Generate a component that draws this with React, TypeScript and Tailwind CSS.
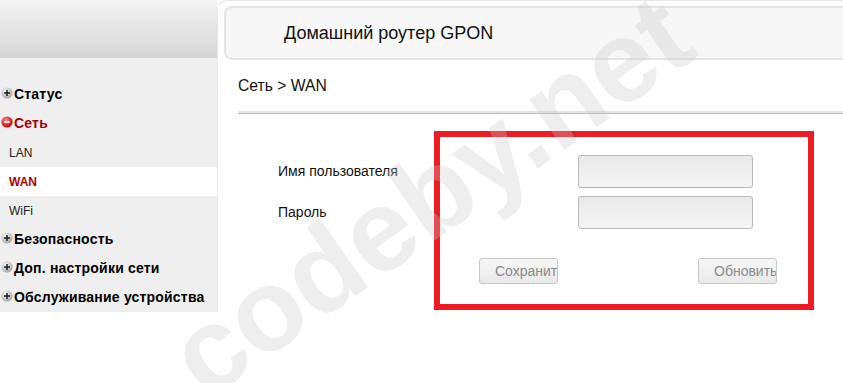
import React from "react";

const font = { fontFamily: '"Liberation Sans", Arial, sans-serif' };

const PlusIcon = ({ open }: { open?: boolean }) => (
  <svg width="12" height="12" viewBox="0 0 12 12" className="shrink-0 -mt-[3px]">
    <defs>
      <radialGradient id={open ? "gr" : "gg"} cx="40%" cy="35%" r="65%">
        <stop offset="0%" stopColor={open ? "#ff8a8a" : "#ffffff"} />
        <stop offset="100%" stopColor={open ? "#c40000" : "#a5a5a5"} />
      </radialGradient>
    </defs>
    <circle cx="6" cy="6" r="5.6" fill={`url(#${open ? "gr" : "gg"})`} />
    <rect x="3" y="5.2" width="6" height="1.6" fill={open ? "#ffffff" : "#222"} />
    {!open && <rect x="5.2" y="3" width="1.6" height="6" fill="#222" />}
  </svg>
);

const Section = ({ label, open }: { label: string; open?: boolean }) => (
  <div className="h-[29px] flex items-center pl-[1px]">
    <PlusIcon open={open} />
    <span
      className={`ml-[1px] text-[14px] tracking-[0.2px] font-bold ${open ? "text-[#a80000]" : "text-black"}`}
    >
      {label}
    </span>
  </div>
);

const SubItem = ({ label, active }: { label: string; active?: boolean }) => (
  <div
    className={`h-[29px] flex items-center pl-[9px] text-[12px] ${
      active ? "bg-white text-[#b00000] font-bold" : "text-[#222]"
    }`}
  >
    {label}
  </div>
);

const Field = () => (
  <div className="w-[175px] h-[33px] rounded-[3px] border border-[#b9b9b9] bg-gradient-to-b from-[#e9e9e9] to-[#f4f4f4]" />
);

const Btn = ({ label }: { label: string }) => (
  <div className="w-[79px] h-[26px] rounded-[3px] border border-[#c6c6c6] bg-gradient-to-b from-[#f7f7f7] to-[#e9e9e9] overflow-hidden whitespace-nowrap pl-[15px] flex items-center text-[14px] text-[#8a8a8a]">
    {label}
  </div>
);

export default function App() {
  return (
    <div className="relative w-[843px] h-[383px] bg-white overflow-hidden" style={font}>
      <div className="flex">
        <aside className="w-[217px] shrink-0">
          <div className="h-[58px] bg-gradient-to-b from-[#f4f4f4] to-[#d5d5d5]" />
          <div className="bg-[#efefef] pt-[22px] pb-0">
            <Section label="Статус" />
            <Section label="Сеть" open />
            <SubItem label="LAN" />
            <SubItem label="WAN" active />
            <SubItem label="WiFi" />
            <Section label="Безопасность" />
            <Section label="Доп. настройки сети" />
            <Section label="Обслуживание устройства" />
          </div>
        </aside>

        <main className="flex-1 min-w-0 border-t border-l border-[#e8e8e8] rounded-tl-[10px] pt-[5px]">
          <div className="ml-[6px] h-[54px] border-2 border-r-0 border-[#e4e4e4] rounded-l-[8px] bg-[#f7f7f7] flex items-center pl-[58px] text-[18px] text-[#111]">
            Домашний роутер GPON
          </div>

          <div className="pl-[20px]">
            <div className="mt-[17px] text-[15.7px] text-[#111] leading-[18px]">Сеть &gt; WAN</div>
            <div className="mt-[16px] h-[3px] border-b border-[#bdbdbd] bg-[#e4e4e4]" />

            <div className="ml-[40px] mt-[41px] grid grid-cols-[300px_175px] gap-y-[8px] items-center">
              <div className="text-[14px] text-[#111]">Имя пользователя</div>
              <Field />
              <div className="text-[14px] text-[#111]">Пароль</div>
              <Field />
            </div>

            <div className="ml-[241px] mt-[29px] flex gap-[140px]">
              <Btn label="Сохранить" />
              <Btn label="Обновить" />
            </div>
          </div>
        </main>
      </div>

      <div className="absolute left-[434px] top-[131px] w-[380px] h-[179px] border-[6px] border-[#ed1c24] pointer-events-none" />

      <div className="absolute left-[430px] top-[195px] -translate-x-1/2 -translate-y-1/2 -rotate-[35deg] whitespace-nowrap text-[116px] font-bold text-[rgba(200,200,200,0.3)] pointer-events-none leading-none">
        codeby.net
      </div>
    </div>
  );
}
